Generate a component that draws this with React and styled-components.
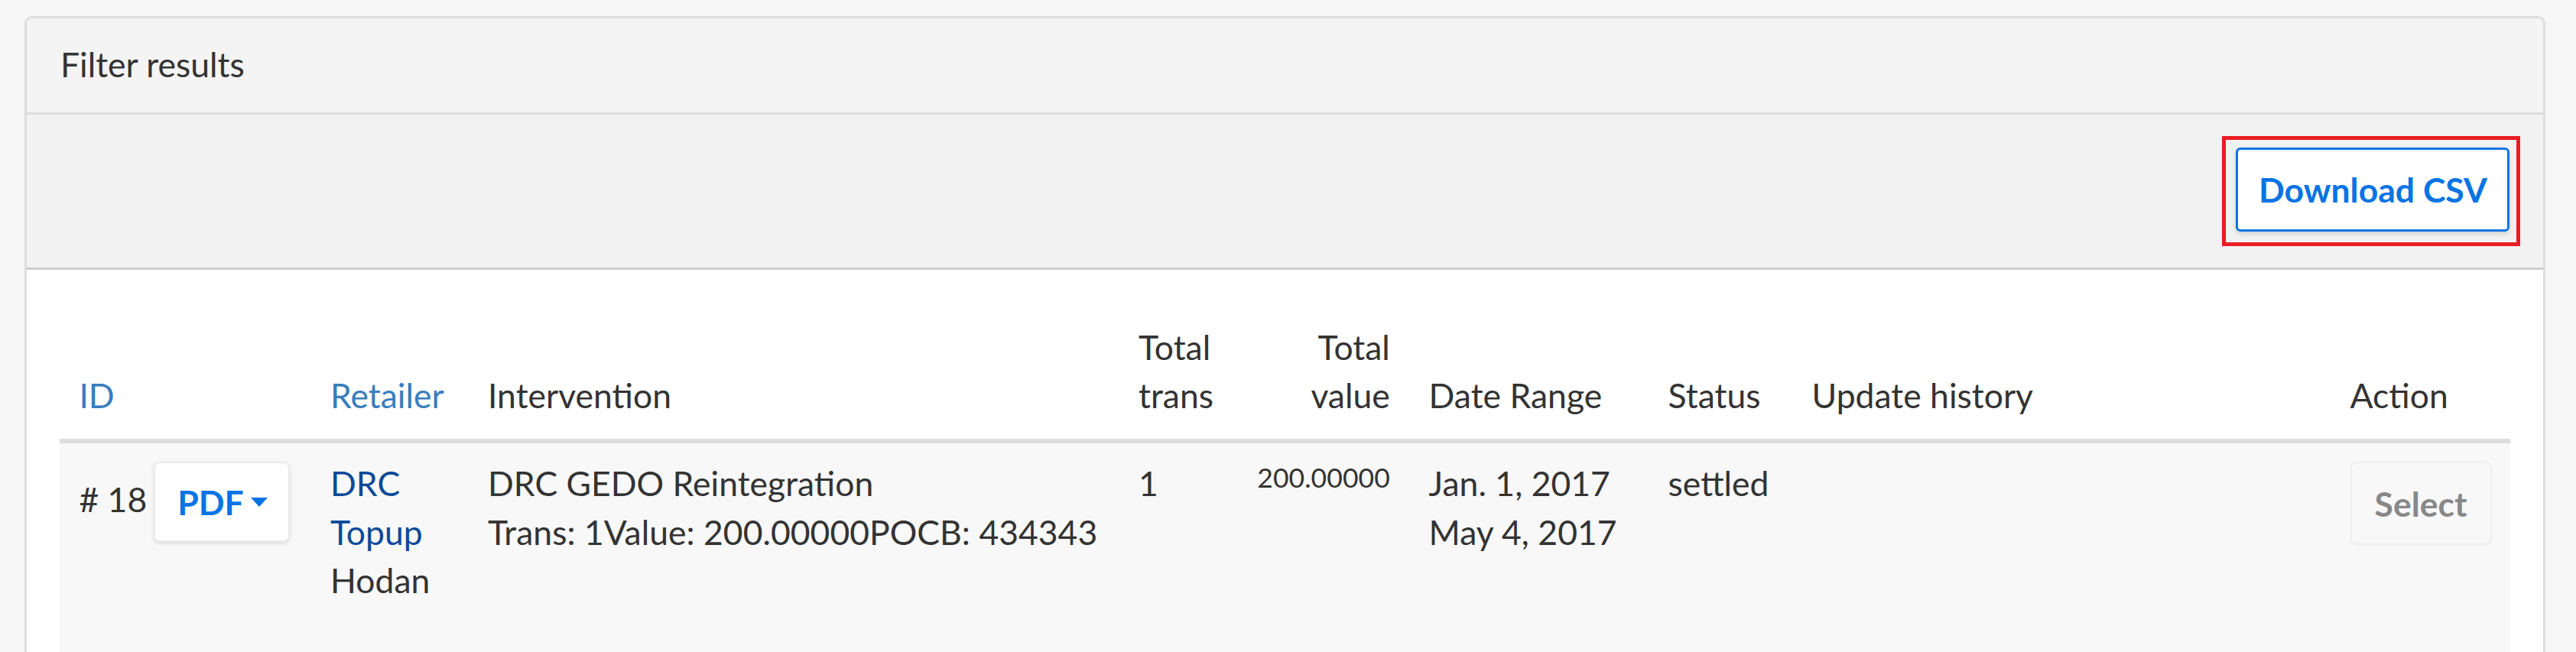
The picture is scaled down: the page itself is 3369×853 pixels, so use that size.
import React from 'react'
import styled, { createGlobalStyle } from 'styled-components'

const GlobalStyle = createGlobalStyle`
    * { box-sizing: border-box; }
    html, body {
        margin: 0;
        padding: 0;
        background: #f6f6f6;
    }
    body {
        font-family: Lato, "Open Sans", "Liberation Sans", sans-serif;
        font-size: 44.5px;
        line-height: 63.5px;
        color: #333;
    }
`

const columns = [
    { key: 'id', label: 'ID', width: 328.6, link: true },
    { key: 'retailer', label: 'Retailer', width: 206, link: true },
    { key: 'intervention', label: 'Intervention', width: 851 },
    { key: 'trans', label: 'Total trans', width: 150 },
    { key: 'value', label: 'Total value', width: 229.6, align: 'right' },
    { key: 'date', label: 'Date Range', width: 313 },
    { key: 'status', label: 'Status', width: 188 },
    { key: 'history', label: 'Update history', width: 704 },
    { key: 'action', label: 'Action', width: 234.4 },
]

const results = [
    {
        id: 18,
        retailer: 'DRC Topup',
        owner: 'Hodan',
        intervention: 'DRC GEDO Reintegration',
        summary: 'Trans: 1Value: 200.00000POCB: 434343',
        trans: 1,
        value: '200.00000',
        start: 'Jan. 1, 2017',
        end: 'May 4, 2017',
        status: 'settled',
    },
]

const App = () => (
    <Page>
        <GlobalStyle />
        <Panel>
            <PanelHeading>Filter results</PanelHeading>

            <Toolbar>
                <Highlight>
                    <DownloadButton type="button">Download CSV</DownloadButton>
                </Highlight>
            </Toolbar>

            <PanelBody>
                <Table>
                    <colgroup>
                        { columns.map(col => <Col key={ col.key } $width={ col.width } />) }
                    </colgroup>
                    <thead>
                        <tr>
                            { columns.map(col => (
                                <Th key={ col.key } $align={ col.align }>
                                    { col.link ? <SortLink href="#">{ col.label }</SortLink> : col.label }
                                </Th>
                            )) }
                        </tr>
                    </thead>
                    <tbody>
                        { results.map(row => (
                            <Row key={ row.id }>
                                <Td>
                                    <IdCell>
                                        <IdText># { row.id }</IdText>
                                        <PdfButton type="button">
                                            PDF<Caret />
                                        </PdfButton>
                                    </IdCell>
                                </Td>
                                <Td>
                                    <RetailerLink href="#">{ row.retailer }</RetailerLink>
                                    <div>{ row.owner }</div>
                                </Td>
                                <Td>
                                    <div>{ row.intervention }</div>
                                    <div>{ row.summary }</div>
                                </Td>
                                <Td>{ row.trans }</Td>
                                <Td $align="right">
                                    <Small>{ row.value }</Small>
                                </Td>
                                <Td>
                                    <div>{ row.start }</div>
                                    <div>{ row.end }</div>
                                </Td>
                                <Td>{ row.status }</Td>
                                <Td />
                                <Td>
                                    <SelectButton type="button" disabled>Select</SelectButton>
                                </Td>
                            </Row>
                        )) }
                    </tbody>
                </Table>
            </PanelBody>
        </Panel>
    </Page>
)

export default App

const Page = styled.div`
    padding: 21px 40px 0 32px;
`

const Panel = styled.section`
    border: 3px solid #ddd;
    border-bottom: none;
    border-radius: 10px 10px 0 0;
    background: #fff;
    overflow: hidden;
`

const PanelHeading = styled.div`
    background: #f4f4f4;
    padding: 28px 44px 31px;
    border-bottom: 3px solid #ddd;
`

const Toolbar = styled.div`
    display: flex;
    justify-content: flex-end;
    align-items: center;
    height: 203px;
    padding-right: 30px;
    background: #f2f2f2;
    border-bottom: 3px solid #ccc;
`

const Highlight = styled.div`
    border: 5px solid #ea1c24;
    padding: 10px 9px 14px 13px;
`

const DownloadButton = styled.button`
    display: block;
    height: 110px;
    padding: 0 26px 0 27px;
    border: 3px solid #0a74e0;
    border-radius: 6px;
    background: #fff;
    box-shadow: 0 3px 6px rgba(0, 0, 0, 0.14);
    color: #0874e4;
    font: 700 44.5px/63.5px Lato, "Open Sans", sans-serif;
    cursor: pointer;
`

const PanelBody = styled.div`
    padding: 44px 44px 0 43px;
`

const Table = styled.table`
    width: 100%;
    table-layout: fixed;
    border-collapse: collapse;
    border-spacing: 0;
`

const Col = styled.col`
    width: ${ p => p.$width }px;
`

const Th = styled.th`
    padding: 25.4px;
    vertical-align: bottom;
    text-align: ${ p => p.$align || 'left' };
    font-weight: 400;
    border-bottom: 6px solid #ddd;
`

const SortLink = styled.a`
    color: #3a7dbd;
    text-decoration: none;
`

const Row = styled.tr`
    background: #f8f8f8;
    height: 300px;
`

const Td = styled.td`
    padding: 20px 25.4px 25.4px;
    vertical-align: top;
    text-align: ${ p => p.$align || 'left' };
`

const IdCell = styled.div`
    display: flex;
    align-items: flex-start;
    gap: 9px;
`

const IdText = styled.span`
    margin-top: 21px;
    white-space: nowrap;
`

const PdfButton = styled.button`
    display: inline-flex;
    align-items: center;
    height: 105px;
    margin-top: 4px;
    padding: 0 27px 0 29px;
    border: 2px solid #ececec;
    border-radius: 8px;
    background: #fff;
    box-shadow: 0 2px 5px rgba(0, 0, 0, 0.12);
    color: #0874e4;
    font: 700 44.5px/63.5px Lato, "Open Sans", sans-serif;
    cursor: pointer;
`

const Caret = styled.span`
    width: 0;
    height: 0;
    margin-left: 9px;
    border-top: 12px solid currentColor;
    border-left: 11.5px solid transparent;
    border-right: 11.5px solid transparent;
`

const RetailerLink = styled.a`
    display: block;
    color: #0d4a99;
    text-decoration: none;
`

const Small = styled.div`
    font-size: 35.6px;
    line-height: 50.8px;
`

const SelectButton = styled.button`
    height: 109px;
    margin-top: 4px;
    padding: 0 30px;
    border: 2px solid #ededed;
    border-radius: 8px;
    background: transparent;
    color: #888;
    font: 700 44.5px/63.5px Lato, "Open Sans", sans-serif;
`
